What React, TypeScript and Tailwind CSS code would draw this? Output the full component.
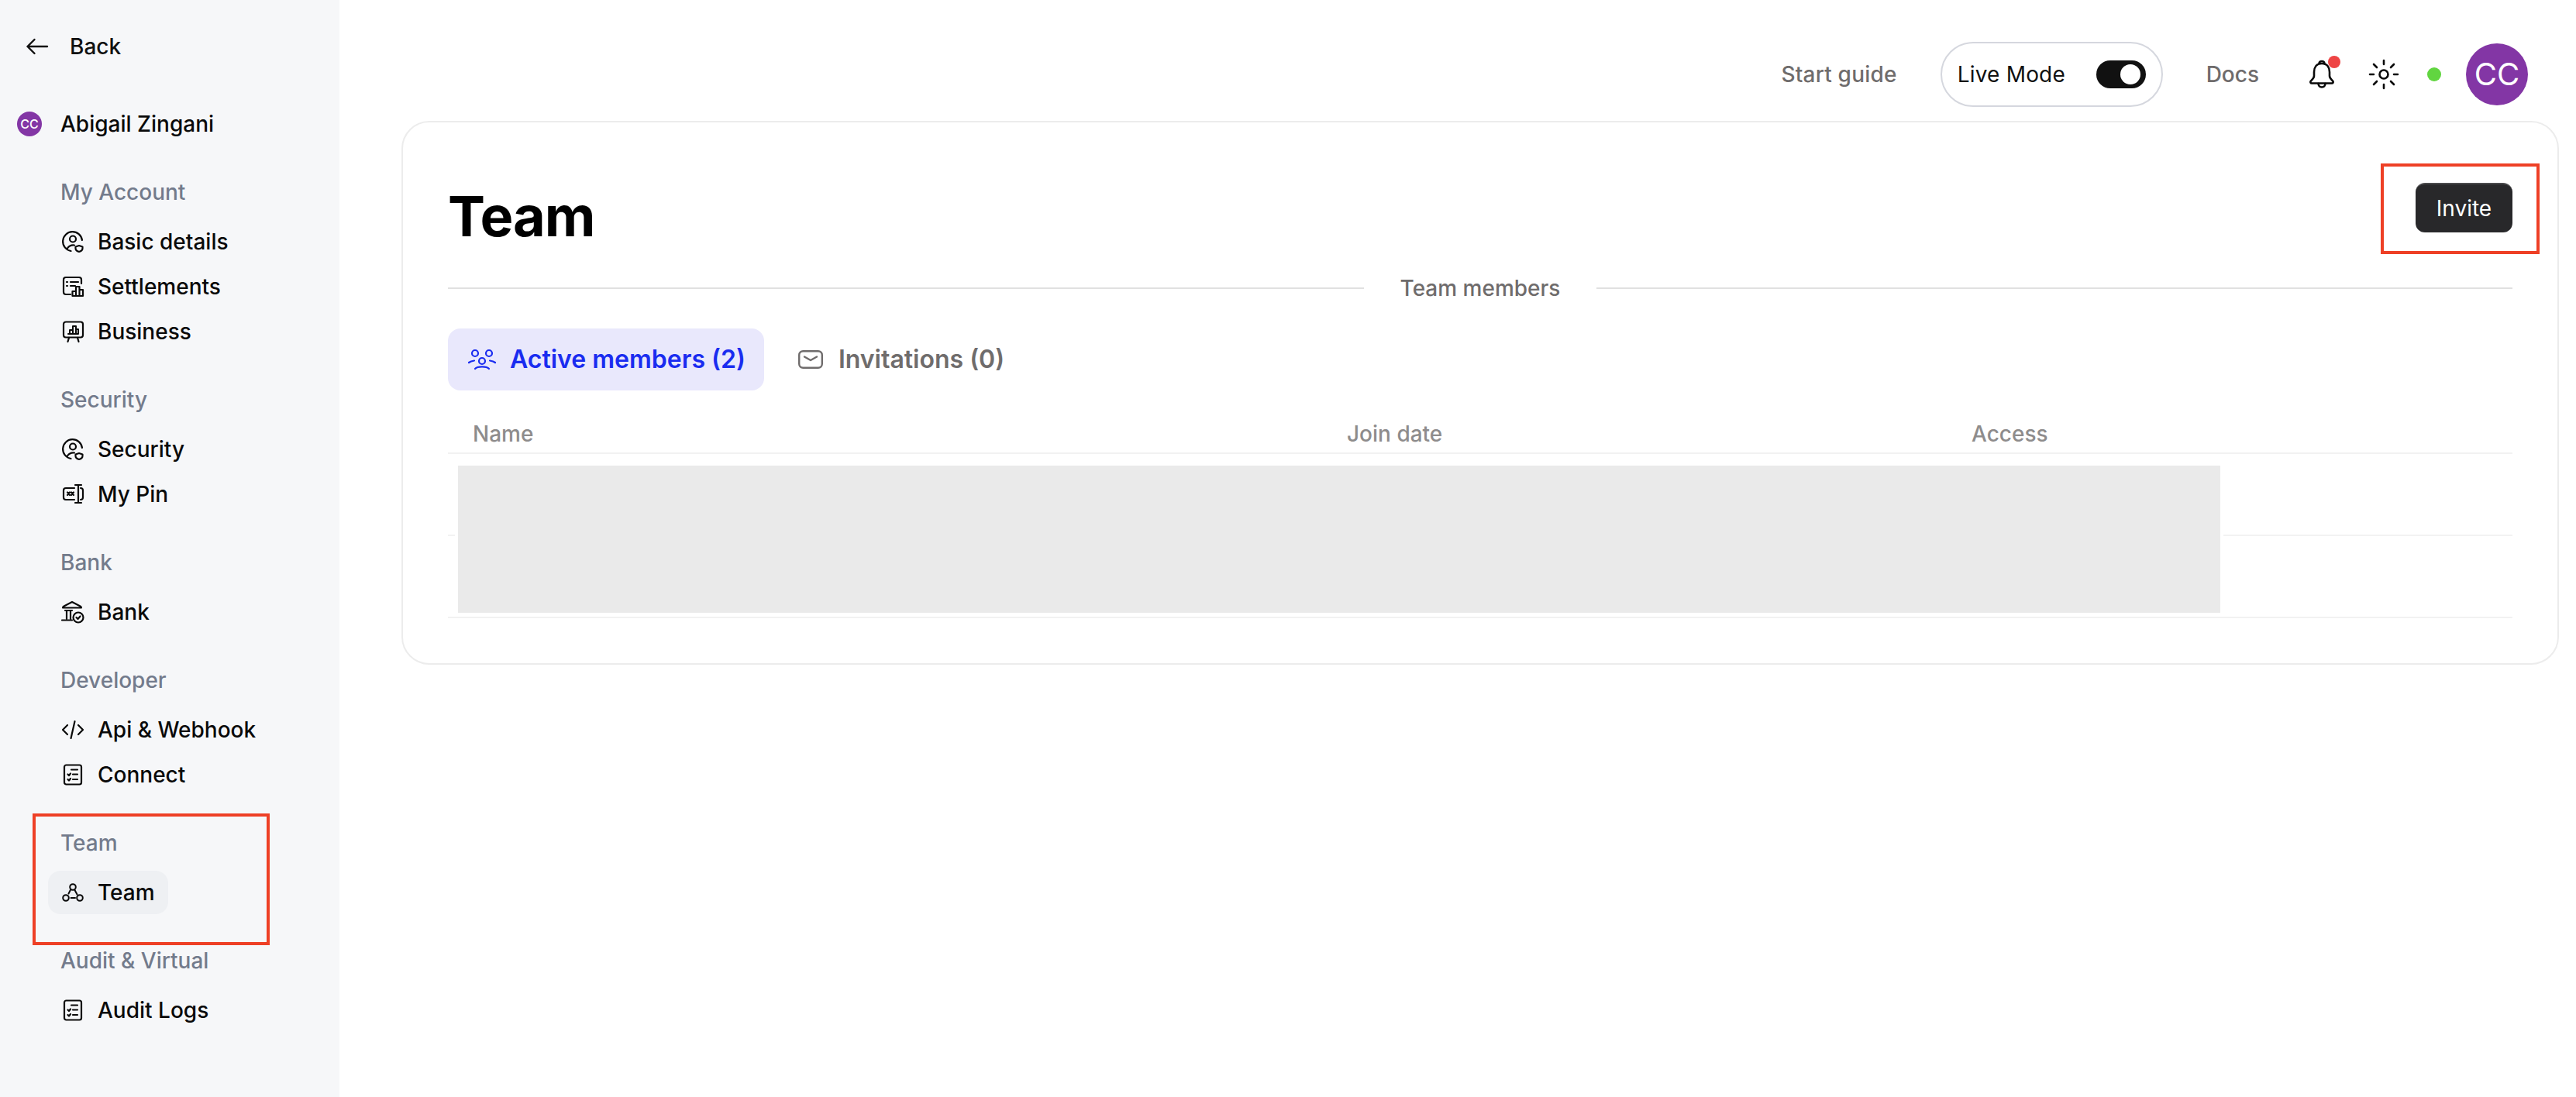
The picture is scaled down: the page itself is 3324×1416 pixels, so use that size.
import type { ReactNode } from "react";

const Icon = ({ children, size = 32, className = "" }: { children: ReactNode; size?: number; className?: string }) => (
  <svg
    width={size}
    height={size}
    viewBox={`0 0 ${size} ${size}`}
    fill="none"
    stroke="currentColor"
    strokeWidth={2.2}
    strokeLinecap="round"
    strokeLinejoin="round"
    className={`shrink-0 ${className}`}
  >
    {children}
  </svg>
);

const UserShieldIcon = () => (
  <Icon>
    <path d="M28 14A12.5 12.5 0 1 0 13.5 28" />
    <circle cx="16" cy="12.5" r="4" />
    <path d="M18 20.5C14 20 11 21.5 9 24.5" />
    <path d="M19.5 22.5L24 21L28.5 22.5V24.5C28.5 27 26 28.5 24 29C22 28.5 19.5 27 19.5 24.5Z" />
  </Icon>
);

const SettlementsIcon = () => (
  <Icon>
    <path d="M27 12V7A3 3 0 0 0 24 4H7A3 3 0 0 0 4 7V23A3 3 0 0 0 7 26H13" />
    <path d="M8 10H9M13 10H23M8 15H9M13 15H19" />
    <path d="M15.5 22H20V28H15.5ZM20 16H24.5V28H20ZM24.5 20H29V28H24.5Z" />
  </Icon>
);

const BusinessIcon = () => (
  <Icon>
    <rect x="4" y="3.5" width="25" height="20" rx="3" />
    <path strokeWidth="2" d="M10 19H23M12 19V14H16V19M16 19V9H20V19M20 13H23V19" />
    <path d="M11 24L9.5 29M22 24L23.5 29" />
  </Icon>
);

const PinIcon = () => (
  <Icon>
    <path d="M18 8H7A3 3 0 0 0 4 11V20A3 3 0 0 0 7 23H18" />
    <path d="M26 8A3 3 0 0 1 29 11V20A3 3 0 0 1 26 23" />
    <path d="M23 4V27M19 4H27M19 27H27" />
    <path d="M9 13.5L12 17M12 13.5L9 17M14 13.5L17 17M17 13.5L14 17" />
  </Icon>
);

const BankIcon = () => (
  <Icon>
    <path d="M3 10.5C3 9.5 3.5 9 4.5 8.5L15 3L25.5 8.5C26.5 9 27 9.5 27 10.5Z" />
    <path d="M6 14H15M8 14V25M13 14V25" />
    <path d="M2 26.5H15" />
    <circle cx="23" cy="23" r="6.5" />
    <path d="M20.5 23L22.5 25L25.5 21.5" />
  </Icon>
);

const CodeIcon = () => (
  <Icon>
    <path d="M9 10L3 16L9 22M23 10L29 16L23 22M18.5 5L13.5 27" />
  </Icon>
);

const ChecklistIcon = () => (
  <Icon>
    <rect x="5" y="3.5" width="22" height="25" rx="2.5" />
    <path d="M14 9.5H22M16 15.5H22M16 22H22" />
    <path d="M9.5 15.5L11 17L13 14.5M9.5 22L11 23.5L13 21" />
  </Icon>
);

const TeamIcon = () => (
  <Icon>
    <g strokeWidth="2">
      <circle cx="16" cy="9" r="3.8" />
      <circle cx="7" cy="23" r="3.8" />
      <circle cx="25" cy="23" r="3.8" />
      <path d="M12.8 13L10.5 17.5M18.5 13L21.5 18.5M13.5 23H19" />
    </g>
  </Icon>
);

const MembersIcon = () => (
  <Icon size={40} className="text-[#1a2cf0]">
    <circle cx="11" cy="12" r="4" />
    <circle cx="29" cy="12" r="4" />
    <circle cx="20" cy="22" r="4" />
    <path d="M3 24C5 22.5 7 22 10 21.5M30 21.5C33 22 35 22.5 37 24M11 32C14 28.5 26 28.5 29 32" />
  </Icon>
);

const sections = [
  {
    title: "My Account",
    items: [
      { label: "Basic details", icon: <UserShieldIcon /> },
      { label: "Settlements", icon: <SettlementsIcon /> },
      { label: "Business", icon: <BusinessIcon /> },
    ],
  },
  {
    title: "Security",
    items: [
      { label: "Security", icon: <UserShieldIcon /> },
      { label: "My Pin", icon: <PinIcon /> },
    ],
  },
  { title: "Bank", items: [{ label: "Bank", icon: <BankIcon /> }] },
  {
    title: "Developer",
    items: [
      { label: "Api & Webhook", icon: <CodeIcon /> },
      { label: "Connect", icon: <ChecklistIcon /> },
    ],
  },
  { title: "Team", items: [{ label: "Team", icon: <TeamIcon />, active: true }], marked: true },
  { title: "Audit & Virtual", items: [{ label: "Audit Logs", icon: <ChecklistIcon /> }] },
];

const Sidebar = () => (
  <aside className="w-[438px] shrink-0 bg-[#f6f7f9] pt-8 min-h-[1416px]">
    <div className="flex h-14 items-center gap-[26px] pl-8 text-[28px] font-[450] text-[#111111]">
      <svg width="32" height="32" viewBox="0 0 32 32" fill="none" stroke="currentColor" strokeWidth="2.4" strokeLinecap="round" strokeLinejoin="round">
        <path d="M3.5 16H29M12.5 7L3.5 16L12.5 25" />
      </svg>
      Back
    </div>
    <div className="mt-[52px] flex h-10 items-center gap-6 pl-[22px] text-[28px] font-[450] text-[#0a0a0a]">
      <div className="flex h-8 w-8 items-center justify-center rounded-full bg-[#8336a5] text-[16px] font-medium text-white">CC</div>
      Abigail Zingani
    </div>
    <nav className="mt-12 flex flex-col gap-10">
      {sections.map((section) => (
        <div key={section.title} className="relative">
          {section.marked && (
            <div className="absolute left-[42px] top-[-18px] h-[170px] w-[306px] border-4 border-[#ee4026]" />
          )}
          <div className="flex h-10 items-center pl-[78px] text-[28px] font-[450] text-[#737b8c]">{section.title}</div>
          <div className="mt-4 flex flex-col items-start gap-0.5 pl-[62px]">
            {section.items.map((item) => (
              <div
                key={item.label}
                className={`flex h-14 items-center gap-4 rounded-2xl pl-4 pr-[17px] text-[28px] font-[450] text-[#0a0a0a] ${
                  "active" in item ? "bg-[#eef0f3]" : ""
                }`}
              >
                {item.icon}
                {item.label}
              </div>
            ))}
          </div>
        </div>
      ))}
    </nav>
  </aside>
);

const Header = () => (
  <header className="flex h-[84px] items-center justify-end pr-10 text-[28px] font-medium text-[#6f6c6c]">
    <span className="tracking-[0.2px]">Start guide</span>
    <div className="ml-14 flex h-[84px] w-[287px] items-center justify-between rounded-full border-2 border-[#d5d7de] pl-5 pr-5 font-normal tracking-[0.2px] text-[#111111]">
      <span>Live Mode</span>
      <div className="flex h-9 w-16 items-center justify-end rounded-full bg-[#111111] pr-[7px]">
        <div className="h-[26px] w-[26px] rounded-full bg-white" />
      </div>
    </div>
    <span className="ml-14">Docs</span>
    <div className="relative ml-[61px] h-10 w-10 text-[#0a0a0a]">
      <Icon size={40}>
        <path strokeWidth="2.6" d="M20 6C13 6 10 11 10 17V22C10 25 7 27 5.5 29C5 30 5.5 31.5 7 31.5H33C34.5 31.5 35 30 34.5 29C33 27 30 25 30 22V17C30 11 27 6 20 6Z" />
        <path strokeWidth="2.6" d="M16.5 6C17 2 23 2 23.5 6M15.5 32C16 38 24 38 24.5 32" />
      </Icon>
      <div className="absolute left-7 top-[-4px] h-4 w-4 rounded-full bg-[#ee4444]" />
    </div>
    <div className="ml-10 h-10 w-10 text-[#0a0a0a]">
      <Icon size={40}>
        <circle cx="20" cy="20" r="5.5" strokeWidth="2.6" />
        <path strokeWidth="2.6" d="M20 2V7M20 33V38M2 20H7M33 20H38M7 7L11 11M29 29L33 33M33 7L29 11M11 29L7 33" />
      </Icon>
    </div>
    <div className="ml-9 h-[18px] w-[18px] rounded-full bg-[#61d540]" />
    <div className="ml-8 flex h-20 w-20 items-center justify-center rounded-full bg-[#8336a5] text-[40px] font-normal text-white">CC</div>
  </header>
);

const TeamCard = () => (
  <section className="mt-[18px] rounded-[36px] border-2 border-[#ececec] bg-white px-[58px] pb-[58px] pt-[78px]">
    <div className="flex items-start justify-between">
      <h1 className="text-[72px] font-bold leading-[86px] tracking-[-1px] text-black">Team</h1>
      <div className="relative">
        <button className="flex h-16 w-[125px] items-center justify-center rounded-xl border-t-2 border-[#4a4a4c] bg-[#28282a] text-[28px] font-normal text-white">
          Invite
        </button>
        <div className="absolute left-[-45px] top-[-25px] h-[117px] w-[205px] border-4 border-[#ee4026]" />
      </div>
    </div>

    <div className="mt-[33px] flex items-center gap-[47px] text-[28px] font-medium text-[#6f6c6c]">
      <div className="h-0.5 flex-1 bg-[#e0e0e0]" />
      <span className="leading-[34px]">Team members</span>
      <div className="h-0.5 flex-1 bg-[#e0e0e0]" />
    </div>

    <div className="mt-[35px] flex items-center gap-5 text-[32px] font-semibold">
      <div className="flex h-20 items-center gap-4 rounded-2xl bg-[#e9e8fc] pl-6 pr-6 text-[#1a2cf0]">
        <MembersIcon />
        Active members (2)
      </div>
      <div className="flex h-20 items-center gap-5 pl-6 text-[#6f6c6c]">
        <svg width="32" height="24" viewBox="0 0 32 24" fill="none" stroke="currentColor" strokeWidth="2.4" strokeLinecap="round" strokeLinejoin="round">
          <rect x="1.2" y="1.2" width="29.6" height="21.6" rx="5" />
          <path d="M8 8.5L16 13L24 8.5" />
        </svg>
        Invitations (0)
      </div>
    </div>

    <div className="mt-9 grid grid-cols-[1128px_806px_1fr] border-b-2 border-[#f2f2f2] pb-1 text-[28px] font-medium leading-10 text-[#8e8c8c]">
      <div className="pl-8">Name</div>
      <div className="pl-8">Join date</div>
      <div className="pl-8">Access</div>
    </div>

    <div className="relative">
      <div className="h-[106px] border-b-2 border-[#f2f2f2]" />
      <div className="h-[106px] border-b-2 border-[#f2f2f2]" />
      <div className="absolute left-[9px] top-[11px] h-[198px] w-[2282px] border-4 border-white bg-[#eaeaea]" />
    </div>
  </section>
);

export default function App() {
  return (
    <div className="flex min-h-[1416px] bg-white font-['Inter',sans-serif]">
      <Sidebar />
      <main className="flex-1 pl-20 pr-[22px] pt-[54px]">
        <Header />
        <TeamCard />
      </main>
    </div>
  );
}
